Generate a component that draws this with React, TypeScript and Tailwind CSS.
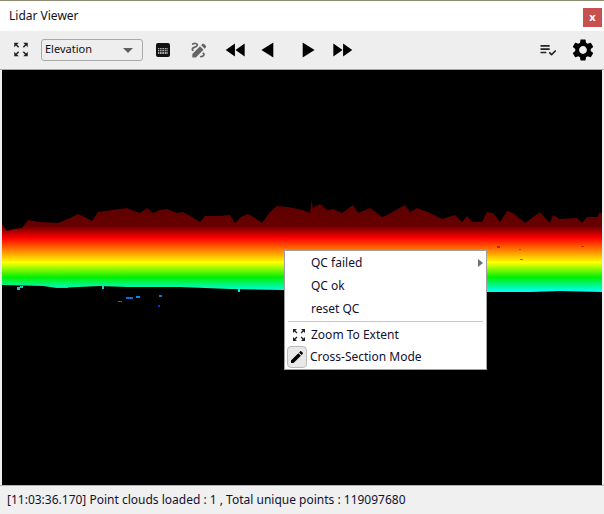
import { MdDraw, MdEdit, MdFastForward, MdFastRewind, MdPlayArrow, MdPlaylistAddCheck, MdSettings, MdZoomOutMap } from 'react-icons/md';

const TOP_EDGE =
  '2,224 7,231 14,229 22,228 28,220 40,222 58,223 70,218 78,214 85,217 92,221 98,212 112,210 127,208 134,211 140,213 147,208 153,213 160,210 167,209 177,213 183,212 192,217 200,222 205,216 218,216 230,215 235,223 241,217 248,214 255,218 262,223 270,212 277,206 288,207 303,210 310,213 311.5,200 313,208 320,204 327,210 333,209 342,213 353,205 358,213 370,208 382,217 387,215 396,210 405,205 410,212 417,208 428,212 442,219 455,215 462,222 467,216 472,222 482,222 487,212 493,213 500,222 507,211 513,213 525,223 540,212 550,223 553,215 560,219 577,218 582,223 587,217 597,217 600,212 602,214';
const BOTTOM_EDGE =
  '602,292 560,291 530,292 487,292 440,291 340,290 283,290 230,289 180,287 127,287 100,286 57,288 43,286 2,285';

const SPECKS = [
  { x: 118, y: 301, w: 4, h: 1, fill: '#0a6ae0' },
  { x: 126, y: 297, w: 7, h: 2, fill: '#0a6ae0' },
  { x: 136, y: 296, w: 4, h: 2, fill: '#0a8ae0' },
  { x: 159, y: 295, w: 3, h: 2, fill: '#0a7ae0' },
  { x: 158, y: 305, w: 2, h: 2, fill: '#0a30d0' },
  { x: 17, y: 287, w: 3, h: 3, fill: '#10c8c8' },
  { x: 20, y: 286, w: 3, h: 2, fill: '#10c8c8' },
  { x: 56, y: 287, w: 12, h: 1, fill: '#10d8d0' },
  { x: 102, y: 286, w: 2, h: 3, fill: '#10d8d0' },
  { x: 238, y: 289, w: 2, h: 3, fill: '#00e8e8' },
  { x: 497, y: 246, w: 3, h: 2, fill: '#b03000' },
  { x: 520, y: 259, w: 3, h: 1, fill: '#c06000' },
  { x: 581, y: 246, w: 3, h: 1, fill: '#b03000' },
  { x: 519, y: 249, w: 2, h: 1, fill: '#c04000' },
];

// point cloud drawn in page coordinates, viewBox starts at the canvas corner
function PointCloud() {
  return (
    <svg viewBox="2 71 600 413" className="block h-full w-full">
      <defs>
        <linearGradient id="elevation" gradientUnits="userSpaceOnUse" x1="0" y1="205" x2="0" y2="292">
          <stop offset="0" stopColor="#5c0000" />
          <stop offset="0.24" stopColor="#680000" />
          <stop offset="0.38" stopColor="#ff0000" />
          <stop offset="0.66" stopColor="#ffff00" />
          <stop offset="0.83" stopColor="#00f000" />
          <stop offset="1" stopColor="#00ffff" />
        </linearGradient>
      </defs>
      <polygon points={`${TOP_EDGE} ${BOTTOM_EDGE}`} fill="url(#elevation)" />
      {SPECKS.map((s) => (
        <rect key={`${s.x}-${s.y}`} x={s.x} y={s.y} width={s.w} height={s.h} fill={s.fill} />
      ))}
    </svg>
  );
}

function CalcIcon() {
  return (
    <svg viewBox="0 0 14 14" className="h-[14px] w-[14px]">
      <rect x="0" y="0" width="14" height="14" rx="2" fill="#111" />
      <rect x="2" y="5" width="10" height="6" fill="#aaa" />
      <path d="M2 6.5h10M2 8.5h10M3.5 5v6M6 5v6M8.5 5v6M11 5v6" stroke="#222" strokeWidth="0.8" />
    </svg>
  );
}

function ContextMenu() {
  return (
    <div className="absolute left-[284px] top-[250px] w-[203px] border border-[#a0a0a0] bg-white pt-px text-[12px] text-[#101030]">
      <div className="relative flex h-[22px] items-center pl-[26px]">
        QC failed
        <span className="absolute right-[3px] top-[7px] h-0 w-0 border-y-[4px] border-l-[5px] border-y-transparent border-l-[#707070]" />
      </div>
      <div className="mt-px flex h-[22px] items-center pl-[26px]">QC ok</div>
      <div className="mt-px flex h-[22px] items-center pl-[26px]">reset QC</div>
      <div className="mx-[3px] mt-[1px] h-px bg-[#c8c8c8]" />
      <div className="mt-px flex h-[23px] items-center">
        <span className="flex w-[26px] items-center justify-center pl-px">
          <MdZoomOutMap className="h-[16px] w-[16px] text-[#222]" />
        </span>
        Zoom To Extent
      </div>
      <div className="flex h-[23px] items-center pb-px">
        <span className="ml-[2px] mr-[2px] flex h-[22px] w-[20px] items-center justify-center rounded-sm border border-[#bbb] bg-[#e8e8e8]">
          <MdEdit className="h-[16px] w-[16px] text-black" />
        </span>
        <span className="ml-[1px]">Cross-Section Mode</span>
      </div>
    </div>
  );
}

export default function App() {
  return (
    <div className="relative flex h-[514px] w-[604px] flex-col overflow-hidden bg-[#eeeeee] font-['Noto_Sans','Open_Sans',sans-serif] text-black">
      <div className="h-px shrink-0 bg-[#8a8a70]" />
      <header className="flex h-[30px] shrink-0 items-center justify-between bg-white pl-[9px] pr-[2px] text-[12px]">
        <span className="text-[#101020]">Lidar Viewer</span>
        <button type="button" className="mt-[2px] flex h-[19px] w-[19px] items-center justify-center bg-[#c75050] pb-[2px] text-[11px] font-bold leading-none text-white">
          x
        </button>
      </header>

      <div className="flex h-[39px] shrink-0 items-center border-b border-[#a8a8a8] bg-[#eeeeee] pb-px">
        <span className="ml-[12px] flex w-[18px] justify-center">
          <MdZoomOutMap className="h-[19px] w-[19px] text-[#222]" />
        </span>
        <div className="relative ml-[11px] flex h-[22px] w-[102px] items-center rounded-[3px] border border-[#a9a9a9] bg-[#eeeeee] pl-[3px] text-[11px] text-[#101020]">
          Elevation
          <span className="absolute right-[9px] top-[8px] h-0 w-0 border-x-[5px] border-t-[5px] border-x-transparent border-t-[#606060]" />
        </div>
        <span className="ml-[13px] flex">
          <CalcIcon />
        </span>
        <span className="ml-[19px] flex">
          <MdDraw className="h-[20px] w-[20px] text-[#666]" />
        </span>
        <MdFastRewind className="ml-[14px] h-[26px] w-[26px] text-black" />
        <MdPlayArrow className="ml-[7px] h-[26px] w-[26px] rotate-180 text-black" />
        <MdPlayArrow className="ml-[12px] h-[26px] w-[26px] text-black" />
        <MdFastForward className="ml-[9px] h-[26px] w-[26px] text-black" />
        <MdPlaylistAddCheck className="ml-auto h-[20px] w-[20px] text-[#222]" />
        <MdSettings className="ml-[12px] mr-[8px] h-[26px] w-[26px] text-black" />
      </div>

      <main className="mx-[2px] min-h-0 flex-1 bg-black">
        <PointCloud />
      </main>

      <footer className="flex h-[29px] shrink-0 items-center border-t border-[#b0b0b0] bg-[#f0f0f0] pl-[7px] text-[12px] text-[#101030]">
        [11:03:36.170] Point clouds loaded : 1 , Total unique points : 119097680
      </footer>

      <ContextMenu />
    </div>
  );
}
